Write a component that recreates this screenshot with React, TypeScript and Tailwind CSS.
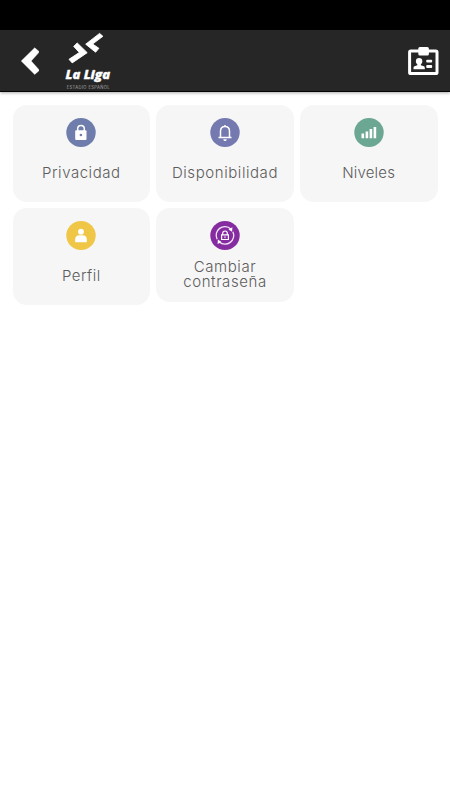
import type { ReactNode } from "react";

function Logo() {
  return (
    <svg className="ml-6 h-[61px] w-[50px] shrink-0" viewBox="63 30 50 61" fill="#fff">
      <g stroke="#fff" strokeWidth=".9" strokeLinejoin="round">
        <path d="M99.6 33.4L102.9 36.3L92.6 44L98.9 48.3L95.6 52.2L85.7 44.2Z" />
        <path d="M77.2 42.9L87.2 52.7L72.2 62.9L69 59.3L79.3 52.5L73.7 46.4Z" />
      </g>
      <text x="65.6" y="79.2" fontFamily="Open Sans, sans-serif" fontSize="13" fontWeight="800" fontStyle="italic" textLength="44.5" lengthAdjust="spacingAndGlyphs" stroke="#fff" strokeWidth=".3">La Liga</text>
      <text x="66.7" y="89.3" fontFamily="Inter, sans-serif" fontSize="4.2" fill="#a8a8a8" textLength="43" lengthAdjust="spacing">ESTADIO ESPAÑOL</text>
    </svg>
  );
}

function Card({ color, label, icon, small = false }: { color: string; label: ReactNode; icon: ReactNode; small?: boolean }) {
  return (
    <button className={`flex flex-col items-center rounded-[14px] bg-[#f6f6f6] pt-[13px] ${small ? "h-[94px]" : "h-[97px]"}`}>
      <svg className="h-[29px] w-[30px] shrink-0" viewBox="-0.5 0 30 29">
        <ellipse cx="14.5" cy="14.5" rx="14.7" ry="14.5" fill={color} />
        {icon}
      </svg>
      <span className={`whitespace-nowrap text-center text-[15px] leading-[15px] font-light text-[#5c5c5c] ${small ? "mt-[9px]" : "mt-[18px]"}`}>{label}</span>
    </button>
  );
}

export default function App() {
  return (
    <div className="h-[800px] w-[450px] bg-white font-['Inter',sans-serif]">
      <div className="relative z-10 h-[30px] bg-black" />
      <header className="flex h-[62px] items-start border-b border-[#050505] bg-[#262626] shadow-[0_1px_3px_#aaa]">
        <svg className="mt-[17px] ml-[21px] h-[28px] w-[18px] shrink-0" viewBox="21 47 18 28" fill="#fff">
          <path d="M34.7 47.8L39.5 51.8L31.2 61L39.5 70.3L34.7 74.4L21.2 61Z" stroke="#fff" strokeWidth=".4" />
        </svg>
        <Logo />
        <svg className="mt-[16px] mr-[11px] ml-auto h-[30px] w-[31px] shrink-0" viewBox="408 46 31 30" fill="#fff">
          <rect x="409.6" y="51.1" width="27.4" height="22.5" rx="1.2" fill="none" stroke="#fff" strokeWidth="3" />
          <rect x="418.3" y="47" width="10.6" height="8.5" rx="1.5" />
          <circle cx="419.1" cy="61.2" r="3.2" />
          <path d="M417.3 63h3.6v2.2l3 1.1q.9.4.9 1.4v1.6h-11.3v-1.6q0-1 1-1.4l2.8-1.1Z" />
          <rect x="426.2" y="59.7" width="6" height="2.9" rx="1.1" />
          <rect x="426.2" y="65.1" width="6" height="2.9" rx="1.1" />
        </svg>
      </header>
      <main className="grid grid-cols-3 items-start gap-x-[6px] gap-y-[6px] px-[12.5px] pt-[13px]">
        <Card color="#6e7dab" label={<span className="tracking-[0.55px]">Privacidad</span>} icon={<>
          <path d="M11.2 13V10.8a3.3 3.3 0 0 1 6.6 0V13" fill="none" stroke="#fff" strokeWidth="1.5" />
          <rect x="8.7" y="12.2" width="11.3" height="9.8" rx="1" fill="#fff" />
          <circle cx="14.4" cy="17" r="1.3" fill="#6e7dab" />
        </>} />
        <Card color="#7479b0" label={<span className="tracking-[0.57px]">Disponibilidad</span>} icon={<>
          <path d="M10 19V13.4c0-3 1.7-4.8 4.5-4.8s4.5 1.8 4.5 4.8V19M8 19.4h13M14.5 7v1.8" fill="none" stroke="#fff" strokeWidth="1.5" />
          <path d="M12.7 21.2h3.6q-.3 1.9-1.8 1.9t-1.8-1.9Z" fill="#fff" />
        </>} />
        <Card color="#6ba792" label={<span className="tracking-[0.2px]">Niveles</span>} icon={<path d="M7 15.5h2.6v4.8H7zM11.1 13.4h2.6v6.9h-2.6zM15.1 11h2.6v9.3h-2.6zM19.1 9h2.6v11.3h-2.6z" fill="#fff" />} />
        <Card color="#efc646" label={<span className="tracking-[0.5px]">Perfil</span>} icon={<>
          <circle cx="14.5" cy="10.7" r="2.9" fill="#fff" />
          <path d="M8.7 21.2v-3.1c0-2.3 1.8-3.9 4.2-3.9h3.2c2.4 0 4.2 1.6 4.2 3.9v3.1Z" fill="#fff" />
        </>} />
        <Card small color="#852da0" label={<><span className="block tracking-[0.6px]">Cambiar</span><span className="block tracking-[0.58px]">contraseña</span></>} icon={<>
          <path d="M6.6 18.3A8.7 8.7 0 0 1 20.3 8M22.4 10.8A8.7 8.7 0 0 1 8.8 21" fill="none" stroke="#f5e6f9" strokeWidth="1.3" />
          <path d="M21.9 6.2l-.3 4.6-3.6-2.4ZM7.1 23.1l.3-4.6 3.6 2.4Z" fill="#fff" />
          <path d="M12.2 13.8v-1.5a2.3 2.3 0 0 1 4.6 0v1.5M11.1 13.8h6.8v4.7h-6.8z" fill="none" stroke="#fff" strokeWidth="1.2" />
          <path d="M14.5 15.3v1.8" stroke="#fff" strokeWidth="1" />
        </>} />
      </main>
    </div>
  );
}
